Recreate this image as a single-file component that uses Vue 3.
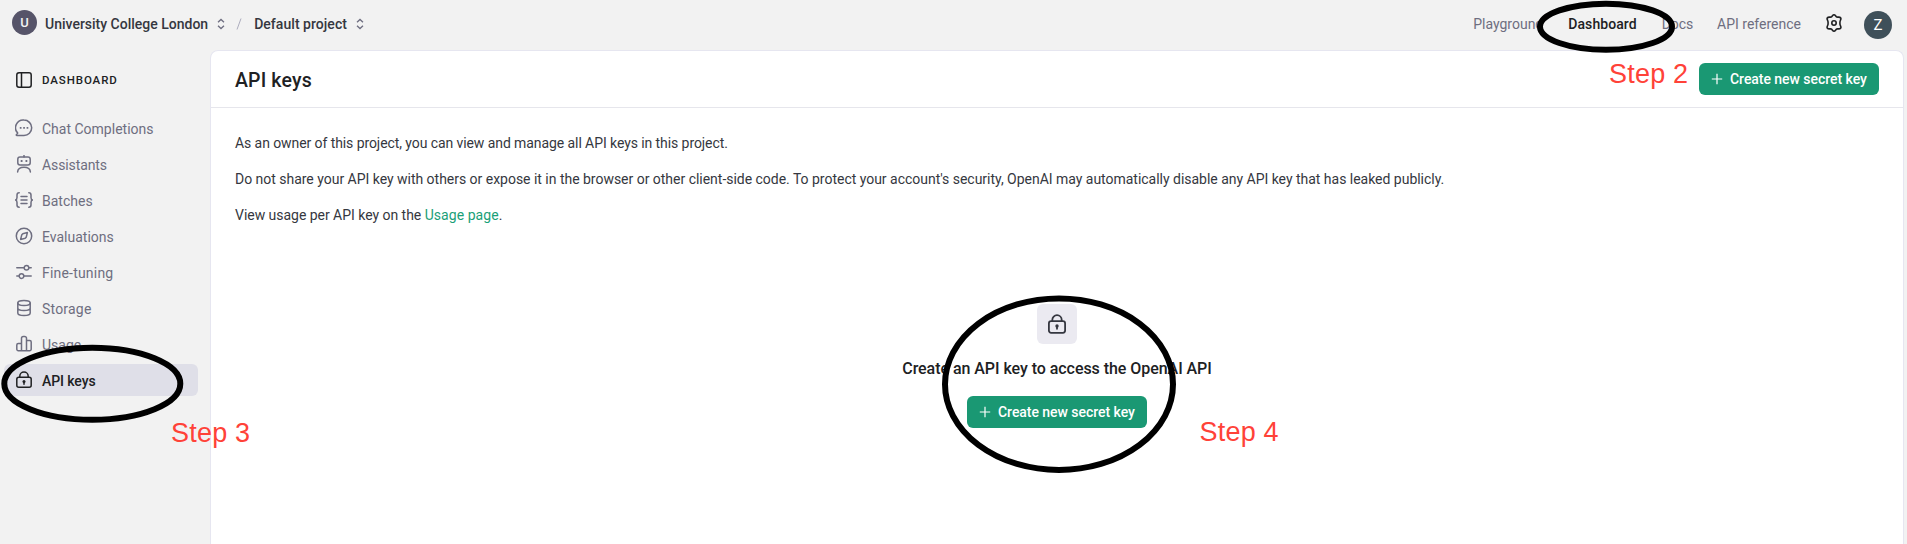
<script setup>
const nav = [
  { id: 'chat', label: 'Chat Completions' },
  { id: 'bot', label: 'Assistants', ls: 'ls-b' },
  { id: 'batch', label: 'Batches' },
  { id: 'eval', label: 'Evaluations' },
  { id: 'tune', label: 'Fine-tuning', ls: 'ls-c' },
  { id: 'storage', label: 'Storage', ls: 'ls-c' },
  { id: 'usage', label: 'Usage' },
  { id: 'keys', label: 'API keys', active: true },
]
</script>

<template>
  <div class="page">
    <header class="topbar">
      <div class="crumbs">
        <span class="org-avatar">U</span>
        <span class="crumb org">University College London</span>
        <svg class="chev" viewBox="0 0 10 12"><path d="M2 4.2 5 1.4 8 4.2M2 7.8 5 10.6 8 7.8" /></svg>
        <svg class="slash" viewBox="0 0 6 12"><path d="M5 .5 1 11.5" /></svg>
        <span class="crumb project">Default project</span>
        <svg class="chev" viewBox="0 0 10 12"><path d="M2 4.2 5 1.4 8 4.2M2 7.8 5 10.6 8 7.8" /></svg>
      </div>
      <nav class="links">
        <a>Playground</a>
        <a class="current">Dashboard</a>
        <a class="docs">Docs</a>
        <a>API reference</a>
        <svg class="gear" viewBox="0 0 18 18">
          <path d="M9 .8c1 0 1.300.8 2 1.600.5.6 1.200.8 2 .7 1.300-.1 2.200 0 2.700.9.500.9.200 1.600-.4 2.600-.400.7-.4 1.100-.4 2.400s0 1.700.4 2.400c.6 1 .9 1.700.4 2.600-.5.900-1.400 1-2.700.9-.8-.1-1.500.1-2 .7-.7.800-1 1.600-2 1.600s-1.300-.8-2-1.600c-.5-.6-1.200-.8-2-.7-1.300.1-2.200 0-2.700-.9-.5-.9-.2-1.600.4-2.600.4-.7.400-1.100.4-2.400s0-1.700-.4-2.400c-.6-1-.9-1.700-.4-2.600.5-.9 1.400-1 2.700-.9.800.1 1.500-.1 2-.7.700-.8 1-1.600 2-1.600Z" />
          <circle cx="9" cy="9" r="2.200" />
        </svg>
        <span class="user-avatar">Z</span>
      </nav>
    </header>

    <div class="body">
      <aside class="sidebar">
        <div class="section">
          <svg class="ico" viewBox="0 0 18 18"><rect x="1.800" y="1.800" width="14.400" height="14.400" rx="2.200" /><path d="M6.500 2v14" /></svg>
          <span>DASHBOARD</span>
        </div>
        <div v-for="n in nav" :key="n.id" class="item" :class="{ active: n.active }">
          <svg class="ico" viewBox="0 0 18 18">
            <template v-if="n.id === 'chat'">
              <path d="M9 1.100a7.700 7.700 0 1 1 0 15.400H1.900c-.6 0-.8-.5-.4-.9l1.200-1.500A7.700 7.700 0 0 1 9 1.100Z" />
              <path class="solid" d="M4.800 8h1.700v1.700H4.800zM8.200 8h1.700v1.700H8.200zM11.600 8h1.700v1.700h-1.700z" />
            </template>
            <template v-else-if="n.id === 'bot'">
              <rect x="2.800" y="2" width="12.400" height="8" rx="2.200" />
              <path d="M9 .2V2M2.600 17c.2-3.200 2.900-4.800 6.400-4.800s6.200 1.600 6.400 4.800" />
              <path class="solid" d="M5.700 5.100h1.800v1.800H5.700zM10.500 5.100h1.800v1.800h-1.800z" />
            </template>
            <template v-else-if="n.id === 'batch'">
              <path d="M4.200 1.800C2.400 1.800 2 2.600 2 4v2.500C2 8 1.500 8.700.5 9 1.500 9.300 2 10 2 11.500V14c0 1.400.4 2.200 2.200 2.200M13.800 1.800c1.800 0 2.200.8 2.200 2.200v2.500c0 1.500.5 2.200 1.500 2.500-1 .3-1.500 1-1.500 2.500V14c0 1.400-.4 2.200-2.200 2.200M6 5.600h6M6 9h6M6 12.400h6" />
            </template>
            <template v-else-if="n.id === 'eval'">
              <circle cx="9" cy="9" r="7.700" />
              <path d="M12.400 5.600 11.200 10.200 10.200 11.200 5.600 12.400 6.800 7.800 7.800 6.800Z" />
            </template>
            <template v-else-if="n.id === 'tune'">
              <circle cx="11.500" cy="4.700" r="2.300" /><circle cx="6.500" cy="13.100" r="2.300" />
              <path d="M1.800 4.700h7.200M13.800 4.700h2.400M1.800 13.100h2.400M8.800 13.100h7.400" />
            </template>
            <template v-else-if="n.id === 'storage'">
              <ellipse cx="9" cy="3.900" rx="6.200" ry="2.500" />
              <path d="M2.800 3.900v10.200c0 1.400 2.800 2.500 6.200 2.500s6.200-1.100 6.200-2.500V3.900M2.800 9c0 1.400 2.800 2.500 6.200 2.500s6.200-1.100 6.200-2.500" />
            </template>
            <template v-else-if="n.id === 'usage'">
              <path d="M6.500 15.700V3.300a1.800 1.800 0 0 1 1.800-1.800h1.400a1.800 1.800 0 0 1 1.800 1.800v12.400M6.500 8.500H3.300a1.500 1.500 0 0 0-1.500 1.500v4.200a1.500 1.500 0 0 0 1.500 1.500h11.400a1.500 1.500 0 0 0 1.500-1.500V7a1.500 1.500 0 0 0-1.500-1.500h-3.200" />
            </template>
            <template v-else>
              <rect x="1.800" y="6.200" width="14.400" height="10" rx="2" />
              <path d="M4.800 6V5.300a4.200 4.200 0 0 1 8.400 0V6M9 10.700v2.600" />
              <circle class="solid" cx="9" cy="10.500" r="1.500" />
            </template>
          </svg>
          <span :class="n.ls">{{ n.label }}</span>
        </div>
      </aside>

      <main class="panel">
        <div class="panel-head">
          <h1>API keys</h1>
          <button class="btn"><svg viewBox="0 0 12 12"><path d="M6 .8v10.400M.8 6h10.400" /></svg><span>Create new secret key</span></button>
        </div>
        <div class="content">
          <p class="p1">As an owner of this project, you can view and manage all API keys in this project.</p>
          <p class="p2">Do not share your API key with others or expose it in the browser or other client-side code. To protect your account's security, OpenAI may automatically disable any API key that has leaked publicly.</p>
          <p class="p3">View usage per API key on the <a>Usage page</a>.</p>
        </div>
        <div class="empty">
          <div class="tile">
            <svg class="ico" viewBox="0 0 18 20">
              <rect x=".9" y="7.200" width="16.200" height="11.600" rx="2.200" />
              <path d="M4.300 7V5.900a4.700 4.700 0 0 1 9.400 0V7M9 12v2.800" />
              <circle class="solid" cx="9" cy="12" r="1.700" />
            </svg>
          </div>
          <h2>Create an API key to access the OpenAI API</h2>
          <button class="btn"><svg viewBox="0 0 12 12"><path d="M6 .8v10.400M.8 6h10.400" /></svg><span>Create new secret key</span></button>
        </div>
      </main>
    </div>

    <svg class="marks" viewBox="0 0 1907 544">
      <ellipse cx="1606" cy="26.700" rx="66" ry="23" />
      <ellipse cx="92.300" cy="383.800" rx="88" ry="36" />
      <ellipse cx="1059" cy="384.200" rx="114" ry="85.800" />
      <text x="1609" y="82.500">Step 2</text>
      <text x="171" y="442">Step 3</text>
      <text x="1199.500" y="441">Step 4</text>
    </svg>
  </div>
</template>

<style>
body { background: #f2f2f2; overflow: hidden; }
</style>

<style scoped>
* { box-sizing: border-box; }
.page {
  position: relative;
  display: flex;
  flex-direction: column;
  width: 1907px;
  height: 544px;
  overflow: hidden;
  background: #f2f2f2;
  color: #353740;
  font: 14px/20px Roboto, "Liberation Sans", sans-serif;
}
svg { fill: none; stroke: currentColor; flex: none; }
.topbar { height: 50px; display: flex; justify-content: space-between; }
.crumbs { display: flex; align-items: center; height: 48px; padding-left: 12px; }
.org-avatar {
  width: 25px; height: 25px; margin: -3px 8px 0 0;
  border-radius: 50%; background: #565469; color: #f2f2f2;
  font-size: 13px; font-weight: 500; line-height: 25px; text-align: center;
}
.crumb { font-weight: 500; color: #353740; }
.project { letter-spacing: 0.040px; }
.chev { width: 10px; height: 12px; margin: -1px 0 0 8px; color: #6e6e80; stroke-width: 1.3; }
.slash { width: 6px; height: 12px; margin: 0 12px 0 10px; color: #acacbe; }
.links { display: flex; align-items: center; height: 48px; padding-right: 15px; color: #6e6e80; }
.links a { margin-right: 25px; }
.links .current { color: #202123; font-weight: 500; letter-spacing: 0.080px; }
.links .docs { margin-right: 24px; letter-spacing: -0.1px; }
.gear { width: 18px; height: 18px; margin: -2px 21px 0 -1px; color: #202123; stroke-width: 1.600; }
.user-avatar {
  width: 28px; height: 28px; margin-top: 2px;
  border-radius: 50%; background: #3f505a; color: #fff;
  font-size: 15px; line-height: 28px; text-align: center;
}
.body { display: flex; flex: 1; min-height: 0; }
.sidebar { width: 210px; padding: 18px 12px 0 4px; }
.section {
  display: flex; align-items: center; height: 24px; margin-bottom: 20px; padding-left: 11px;
  color: #202123; font-size: 11.500px; font-weight: 500; letter-spacing: 0.900px;
}
.item { display: flex; align-items: center; height: 32px; margin-bottom: 4px; padding-left: 11px; border-radius: 6px; color: #6e6e80; }
.item span { padding-top: 2px; }
.item.active { background: #dfdfe8; color: #202123; font-weight: 500; letter-spacing: -0.1px; }
.ico { width: 18px; height: 18px; margin-right: 9px; stroke-width: 1.500; stroke-linecap: round; stroke-linejoin: round; }
.solid { fill: currentColor; stroke: none; }
.ls-b { letter-spacing: -0.1px; }
.ls-c { letter-spacing: 0.2px; }
.panel { width: 1694px; border: 1px solid #e6e6f0; border-bottom: 0; border-radius: 8px 8px 0 0; background: #fff; }
.panel-head { display: flex; align-items: center; justify-content: space-between; height: 57px; padding: 0 24px; border-bottom: 1px solid #e6e6ec; }
h1 { margin: 4px 0 0; color: #202123; font-size: 19.500px; font-weight: 500; line-height: 26px; letter-spacing: 0.150px; }
.btn {
  display: flex; align-items: center; width: 180px; height: 32px; padding: 0 0 0 12px;
  border: 0; border-radius: 6px; background: #1a9873; color: #fff;
  font: 500 14px/20px Roboto, "Liberation Sans", sans-serif; letter-spacing: -0.040px; white-space: nowrap;
}
.btn svg { width: 12px; height: 12px; margin-right: 7px; stroke-width: 1.200; }
.content { padding: 25px 24px 0; }
.content p { margin: 0 0 16px; line-height: 20px; white-space: nowrap; }
.p1 { letter-spacing: -0.080px; }
.p2 { letter-spacing: -0.020px; }
.p3 { letter-spacing: -0.030px; }
.p3 a { color: #1a9f78; letter-spacing: 0.050px; }
.empty { display: flex; flex-direction: column; align-items: center; width: 1692px; padding-top: 63px; }
.tile { display: flex; align-items: center; justify-content: center; width: 40px; height: 40px; border-radius: 6px; background: #ebeaf1; color: #353740; }
.tile .ico { width: 18px; height: 20px; margin: 0; stroke-width: 1.800; }
h2 { margin: 13px 0 15px; color: #202123; font-size: 16px; font-weight: 500; line-height: 24px; letter-spacing: -0.050px; }
.marks { position: absolute; inset: 0; width: 1907px; height: 544px; pointer-events: none; }
.marks ellipse { stroke: #000; stroke-width: 6; }
.marks text { fill: #ff4238; stroke: none; font: 27px "Liberation Sans", sans-serif; letter-spacing: 0.200px; }
</style>
